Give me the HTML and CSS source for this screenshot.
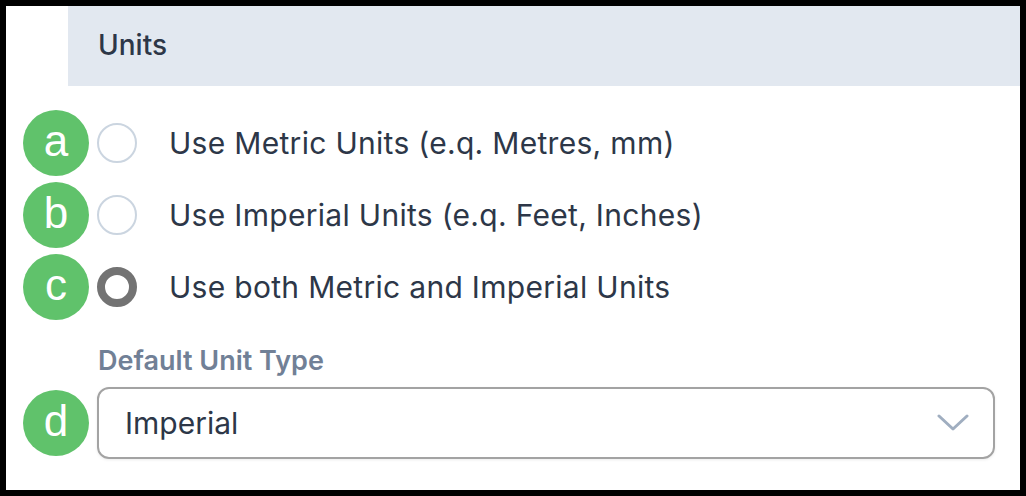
FILE: index.html
```html
<!DOCTYPE html>
<html>
<head>
<meta charset="utf-8">
<link rel="stylesheet" href="styles.css">
</head>
<body>
<div class="frame">
  <div class="panel">
    <div class="header">Units</div>
    <div class="options">
      <label class="option">
        <span class="radio"></span>
        <span class="option-text">Use Metric Units (e.q. Metres, mm)</span>
        <span class="badge">a</span>
      </label>
      <label class="option">
        <span class="radio"></span>
        <span class="option-text">Use Imperial Units (e.q. Feet, Inches)</span>
        <span class="badge">b</span>
      </label>
      <label class="option">
        <span class="radio radio-checked"></span>
        <span class="option-text">Use both Metric and Imperial Units</span>
        <span class="badge">c</span>
      </label>
    </div>
    <div class="field">
      <div class="field-label">Default Unit Type</div>
      <div class="select">
        <span class="select-value">Imperial</span>
        <svg class="chevron" width="32" height="18" viewBox="0 0 32 18"><path d="M2 2 L16 15 L30 2" fill="none" stroke="#a0aec0" stroke-width="3" stroke-linecap="round" stroke-linejoin="round"/></svg>
        <span class="badge badge-d">d</span>
      </div>
    </div>
  </div>
</div>
</body>
</html>
```

FILE: styles.css
```css
html, body {
  margin: 0;
  padding: 0;
  background: #000;
}
body {
  width: 1026px;
  height: 496px;
  overflow: hidden;
}
.frame {
  margin: 6px;
  width: 1014px;
  height: 484px;
  background: #fff;
  font-family: Inter, "Liberation Sans", sans-serif;
  color: #2d3748;
}
.panel {
  margin-left: 62px;
}
.header {
  height: 80px;
  background: #e2e8f0;
  padding-left: 30px;
  display: flex;
  align-items: center;
  font-size: 28px;
  font-weight: 500;
  box-sizing: border-box;
  padding-bottom: 3px;
}
.options {
  padding-top: 21px;
  padding-left: 29px;
}
.option {
  position: relative;
  display: flex;
  align-items: center;
  height: 72px;
}
.radio {
  width: 40px;
  height: 40px;
  box-sizing: border-box;
  border: 2px solid #cbd5e0;
  border-radius: 50%;
  background: #fff;
  flex: none;
}
.radio-checked {
  border: 8px solid #737373;
}
.option-text {
  margin-left: 32px;
  font-size: 30px;
  letter-spacing: 0.3px;
}
.badge {
  position: absolute;
  width: 66px;
  height: 66px;
  border-radius: 50%;
  background: #60c26b;
  color: #fff;
  font-family: "Liberation Sans", Arial, sans-serif;
  font-size: 44px;
  display: flex;
  align-items: center;
  justify-content: center;
  left: -74px;
  top: 50%;
  margin-top: -33px;
  line-height: 1;
  padding-bottom: 4px;
  box-sizing: border-box;
}
.field {
  padding-left: 29px;
  padding-top: 18px;
}
.field-label {
  font-size: 27px;
  font-weight: 600;
  color: #718096;
  height: 46px;
  padding-left: 1px;
  line-height: 40px;
}
.select {
  position: relative;
  width: 898px;
  height: 72px;
  box-sizing: border-box;
  border: 2px solid #a3a3a3;
  border-radius: 12px;
  box-shadow: 0 1px 3px rgba(0,0,0,0.08);
  display: flex;
  align-items: center;
  padding-left: 26px;
  padding-right: 24px;
  justify-content: space-between;
}
.select-value {
  font-size: 30px;
}
.chevron {
  display: block;
}
.badge-d {
  left: -76px;
}
```
